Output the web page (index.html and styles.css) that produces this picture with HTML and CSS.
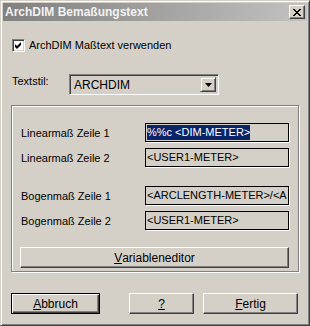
FILE: index.html
```html
<!DOCTYPE html>
<html lang="de">
<head>
<meta charset="utf-8">
<title>ArchDIM Bemaßungstext</title>
<link rel="stylesheet" href="styles.css">
</head>
<body>
<div class="window">
  <div class="titlebar">
    <span class="title">ArchDIM Bemaßungstext</span>
    <span class="close">
      <svg width="8" height="7" viewBox="0 0 8 7"><path d="M0 0h2v1h-2zM1 1h2v1h-2zM2 2h4v1h-4zM3 3h2v1h-2zM2 4h4v1h-4zM1 5h2v1h-2zM0 6h2v1h-2zM6 0h2v1h-2zM5 1h2v1h-2zM5 5h2v1h-2zM6 6h2v1h-2z" fill="#000"/></svg>
    </span>
  </div>
  <div class="content">
    <div class="check-row">
      <span class="checkbox">
        <svg width="7" height="7" viewBox="0 0 7 7"><path d="M6 0v3L2 7L0 5V2l2 2z" fill="#000"/></svg>
      </span>
      <span>ArchDIM Maßtext verwenden</span>
    </div>
    <div class="style-row">
      <span class="style-label">Textstil:</span>
      <div class="combo">
        <span class="combo-text">ARCHDIM</span>
        <span class="combo-btn"><svg width="7" height="4" viewBox="0 0 7 4"><path d="M0 0h7L3.5 4z" fill="#000"/></svg></span>
      </div>
    </div>
    <div class="group">
      <div class="field-row">
        <span class="field-label">Linearmaß Zeile 1</span>
        <span class="edit"><span class="selected">%%c &lt;DIM-METER&gt;</span></span>
      </div>
      <div class="field-row row-near">
        <span class="field-label">Linearmaß Zeile 2</span>
        <span class="edit">&lt;USER1-METER&gt;</span>
      </div>
      <div class="field-row row-far">
        <span class="field-label">Bogenmaß Zeile 1</span>
        <span class="edit">&lt;ARCLENGTH-METER&gt;/&lt;A</span>
      </div>
      <div class="field-row row-near">
        <span class="field-label">Bogenmaß Zeile 2</span>
        <span class="edit">&lt;USER1-METER&gt;</span>
      </div>
      <div class="btn wide-btn"><span class="u">V</span>ariableneditor</div>
    </div>
    <div class="button-row">
      <div class="btn default-btn btn-cancel"><span class="u">A</span>bbruch</div>
      <div class="btn btn-help"><span class="u">?</span></div>
      <div class="btn btn-done"><span class="u">F</span>ertig</div>
    </div>
  </div>
</div>
</body>
</html>
```

FILE: styles.css
```css
* { box-sizing: border-box; }
html, body { margin: 0; padding: 0; }
body {
  width: 310px;
  height: 326px;
  overflow: hidden;
  background: #d4d0c8;
  font-family: "Liberation Sans", Arial, sans-serif;
  font-size: 11px;
  color: #000;
}
.window {
  width: 310px;
  height: 326px;
  border: 1px solid;
  border-color: #d4d0c8 #404040 #404040 #d4d0c8;
  box-shadow: inset 1px 1px #fff, inset -1px -1px #808080;
  padding: 2px;
  display: flex;
  flex-direction: column;
  background: #d4d0c8;
}
.titlebar {
  height: 18px;
  flex-shrink: 0;
  background: linear-gradient(to right, #808080, #c4c2c0);
  display: flex;
  align-items: center;
  justify-content: space-between;
  padding: 0 2px;
}
.title {
  color: #f2f2f2;
  font-weight: bold;
  font-size: 12px;
  line-height: 14px;
}
.close {
  width: 16px;
  height: 14px;
  background: #d4d0c8;
  border: 1px solid;
  border-color: #fff #404040 #404040 #fff;
  box-shadow: inset -1px -1px #808080;
  display: flex;
  align-items: center;
  justify-content: center;
  padding-right: 1px;
}
.close svg { display: block; }
.content {
  flex: 1;
  padding: 18px 8px 0 8px;
  display: flex;
  flex-direction: column;
}
.check-row {
  display: flex;
  align-items: center;
  gap: 4px;
  margin-left: 1px;
  height: 13px;
  line-height: 13px;
}
.checkbox {
  width: 13px;
  height: 13px;
  flex-shrink: 0;
  background: #fff;
  border: 1px solid;
  border-color: #808080 #fff #fff #808080;
  box-shadow: inset 1px 1px #404040, inset -1px -1px #d4d0c8;
  display: flex;
  align-items: center;
  justify-content: center;
}
.checkbox svg { display: block; }
.style-row {
  display: flex;
  align-items: flex-start;
  margin-top: 22px;
}
.style-label {
  width: 57px;
  margin-left: 1px;
  margin-top: 1px;
  line-height: 13px;
}
.combo {
  width: 150px;
  height: 21px;
  border: 1px solid;
  border-color: #808080 #fff #fff #808080;
  box-shadow: inset 1px 1px #404040, inset -1px -1px #d4d0c8;
  display: flex;
  align-items: center;
  justify-content: space-between;
  padding: 2px 2px 2px 4px;
  font-size: 12px;
}
.combo-text { line-height: 13px; padding-top: 2px; }
.combo-btn {
  width: 16px;
  height: 15px;
  background: #d4d0c8;
  border: 1px solid;
  border-color: #d4d0c8 #404040 #404040 #d4d0c8;
  box-shadow: inset 1px 1px #fff, inset -1px -1px #808080;
  display: flex;
  align-items: center;
  justify-content: center;
}
.combo-btn svg { display: block; }
.group {
  margin-top: 10px;
  height: 167px;
  border: 1px solid #808080;
  box-shadow: inset 1px 1px #fff, 1px 1px #fff;
  padding: 17px 8px 3px 9px;
  display: flex;
  flex-direction: column;
}
.field-row {
  display: flex;
  align-items: center;
  height: 19px;
}
.row-near { margin-top: 6px; }
.row-far { margin-top: 19px; }
.field-label {
  width: 124px;
  flex-shrink: 0;
  padding-top: 1px;
}
.edit {
  width: 144px;
  height: 19px;
  border: 1px solid #000;
  box-shadow: 1px 1px #fff;
  padding: 0 1px;
  line-height: 17px;
  white-space: nowrap;
  overflow: hidden;
}
.selected {
  background: #0a246a;
  color: #fff;
  display: inline-block;
  line-height: 15px;
  margin-top: 1px;
  vertical-align: top;
}
.btn {
  height: 21px;
  background: #d4d0c8;
  border: 1px solid;
  border-color: #fff #404040 #404040 #fff;
  box-shadow: inset -1px -1px #808080;
  display: flex;
  align-items: center;
  justify-content: center;
  font-size: 12px;
}
.u { text-decoration: underline; }
.wide-btn {
  margin-top: 17px;
  margin-left: -1px;
  width: 269px;
}
.button-row {
  display: flex;
  margin-top: 21px;
}
.default-btn {
  border: 1px solid #000;
  box-shadow: inset 1px 1px #fff, inset -1px -1px #404040, inset -2px -2px #808080;
}
.btn-cancel { width: 89px; }
.btn-help { width: 65px; margin-left: 29px; }
.btn-done { width: 95px; margin-left: 9px; }
```
